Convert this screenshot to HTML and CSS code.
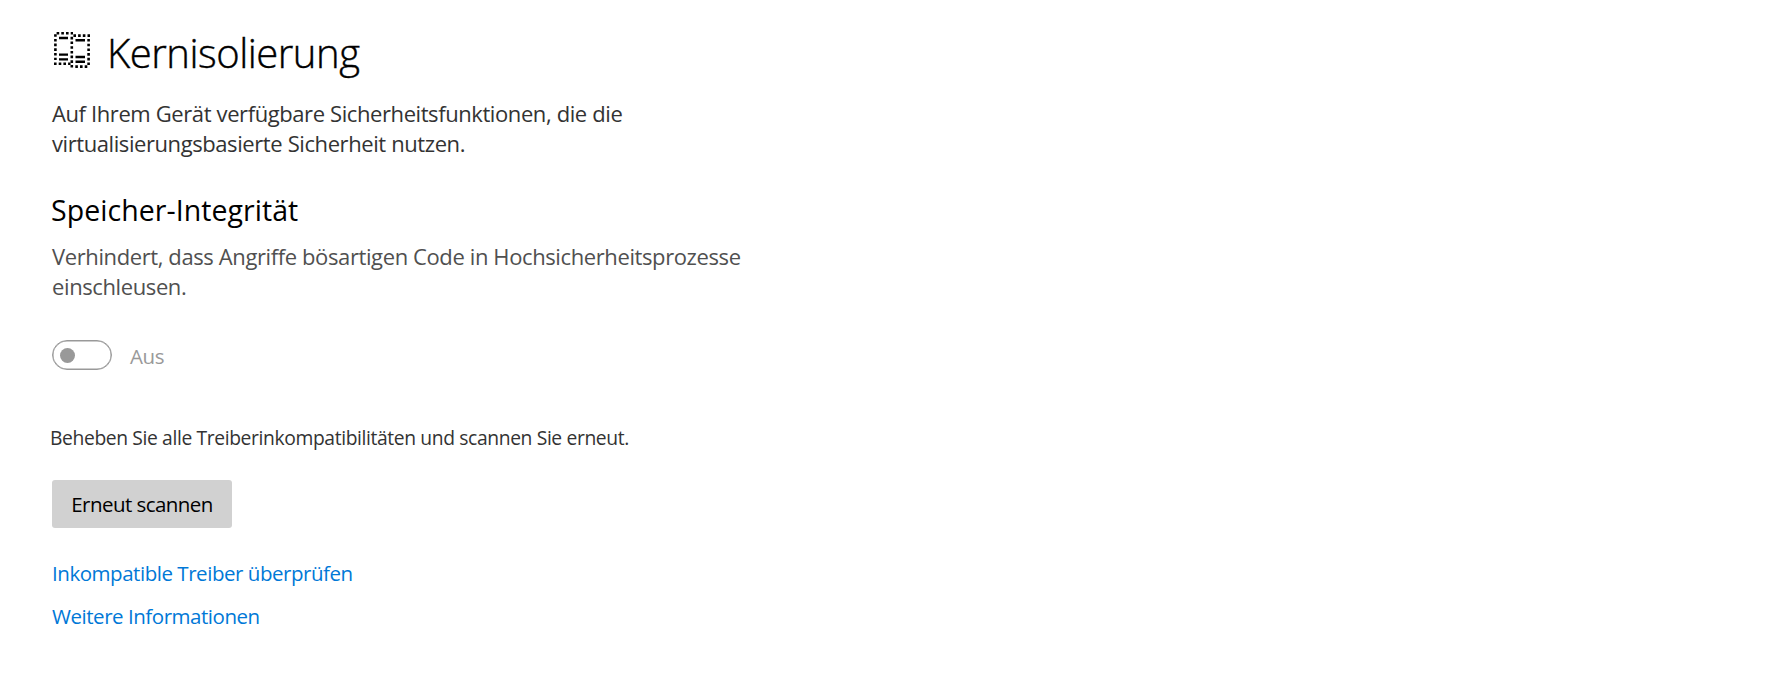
FILE: index.html
```html
<!DOCTYPE html>
<html lang="de">
<head>
    <meta charset="UTF-8">
    <meta name="viewport" content="width=device-width, initial-scale=1.0">
    <title>Kernisolierung</title>
    <link rel="stylesheet" href="styles.css">
</head>
<body>

<main>
    <header class="page-header">
        <svg class="page-icon" width="36" height="36" viewBox="0 0 36 36" fill="none" stroke="#000">
            <!-- dotted frames -->
            <path stroke-width="2.6" stroke-dasharray="2.6 2.1" d="M2.6 1.3H19M19.4 3.6H36M0 31.8H16.5M21.3 34.6H34"/>
            <path stroke-width="2.6" stroke-dasharray="2.6 2.1" d="M1.4 2.2V28M17.8 4.8V36M34.6 7V33"/>
            <!-- bars -->
            <path stroke-width="2.4" d="M5 6H14M5 22.6H14M5 27.4H14M21.5 8.2H31M21.5 25H31M21.5 29.8H31"/>
        </svg>
        <h1>Kernisolierung</h1>
    </header>

    <p class="intro">Auf Ihrem Gerät verfügbare Sicherheitsfunktionen, die die<br>virtualisierungsbasierte Sicherheit nutzen.</p>

    <h2>Speicher-Integrität</h2>
    <p class="description">Verhindert, dass Angriffe bösartigen Code in Hochsicherheitsprozesse<br>einschleusen.</p>

    <div class="toggle-row">
        <span class="toggle"><span class="knob"></span></span>
        <span class="toggle-label">Aus</span>
    </div>

    <p class="notice">Beheben Sie alle Treiberinkompatibilitäten und scannen Sie erneut.</p>

    <button type="button">Erneut scannen</button>

    <nav class="links">
        <a href="#">Inkompatible Treiber überprüfen</a>
        <a href="#">Weitere Informationen</a>
    </nav>
</main>

</body>
</html>
```

FILE: styles.css
```css
body {
    font-family: 'Segoe UI', 'Open Sans', sans-serif;
    background-color: #fff;
    color: #000;
    margin: 0;
}

main {
    display: flex;
    flex-direction: column;
    align-items: flex-start;
    padding: 24px 52px;
}

h1, h2, p {
    margin: 0;
}

.page-header {
    display: flex;
    align-items: flex-start;
    gap: 17px;
    padding-left: 2px;
}

.page-icon {
    margin-top: 8px;
}

h1 {
    font-size: 40px;
    line-height: 58px;
    font-weight: 300;
    letter-spacing: -0.48px;
    -webkit-text-stroke: 0.4px #000;
}

.intro {
    margin-top: 16px;
    font-size: 22px;
    line-height: 30px;
    letter-spacing: -0.42px;
    word-spacing: 0.2px;
    color: #333;
}

h2 {
    margin-top: 33px;
    margin-left: -1px;
    font-size: 28.5px;
    line-height: 38px;
    font-weight: 400;
    letter-spacing: 0.05px;
}

.description {
    margin-top: 12px;
    font-size: 22px;
    line-height: 30px;
    letter-spacing: -0.39px;
    color: #505050;
}

.toggle-row {
    display: flex;
    gap: 18px;
    margin-top: 39px;
    height: 30px;
}

.toggle {
    box-sizing: border-box;
    display: flex;
    align-items: center;
    width: 60px;
    height: 30px;
    padding-left: 7px;
    border: 1px solid #999;
    border-radius: 15px;
    box-shadow: inset 0 0 0 0.5px #999;
}

.knob {
    width: 15px;
    height: 15px;
    border-radius: 50%;
    background-color: #999;
}

.toggle-label {
    padding-top: 1px;
    font-size: 20.5px;
    line-height: 30px;
    letter-spacing: -0.4px;
    color: #999;
}

.notice {
    margin-top: 54px;
    margin-left: -2px;
    font-size: 19.3px;
    line-height: 28px;
    letter-spacing: -0.38px;
    color: #333;
}

button {
    width: 180px;
    height: 48px;
    margin-top: 28px;
    padding: 0;
    border: none;
    border-radius: 3px;
    background-color: #d1d1d1;
    color: #000;
    font-family: inherit;
    font-size: 20.5px;
    line-height: 48px;
    letter-spacing: -0.56px;
}

.links {
    display: flex;
    flex-direction: column;
    gap: 15px;
    margin-top: 31px;
}

.links a {
    font-size: 20.5px;
    line-height: 28px;
    letter-spacing: -0.46px;
    color: #0078d7;
    text-decoration: none;
}
```
